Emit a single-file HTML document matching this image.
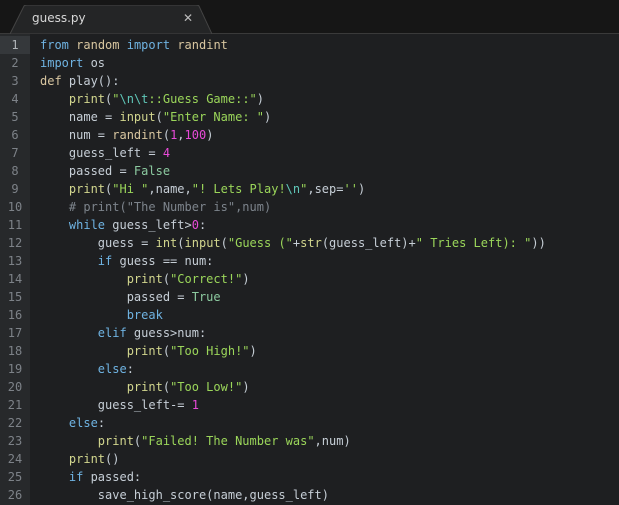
<!DOCTYPE html>
<html><head><style>
body{margin:0;width:619px;height:505px;overflow:hidden;background:#1e1f21;font-family:"DejaVu Sans Mono","Liberation Mono",monospace;}
.bar{position:absolute;left:0;top:0;width:619px;height:33px;background:#161616;border-bottom:1px solid #3a3a3a;}
.tab{position:absolute;left:10px;top:5px;width:202px;height:29px;}
.tab svg{position:absolute;left:0;top:0}
.tab .t{position:absolute;left:22px;top:6px;font:12px "DejaVu Sans","Liberation Sans",sans-serif;color:#d8d8d8}
.tab .x{position:absolute;left:173px;top:6px;font:12px "DejaVu Sans",sans-serif;color:#bbb}
.gut{position:absolute;left:0;top:34px;width:30px;height:471px;background:#27292b;}
.ln{position:absolute;left:0;width:30px;text-align:center;font-size:12px;color:#7d8288;line-height:18px}
.cur{position:absolute;left:0;top:36px;width:30px;height:18px;background:#35383b}
pre{position:absolute;left:40px;top:36px;margin:0;font-size:12px;line-height:18px;color:#c6ced6;font-family:inherit}
.k{color:#6fb3e2}.b{color:#d2d68e}.m{color:#d8c6a0}.s{color:#9bd65a}.e{color:#5fc7b8}.n{color:#e84ad8}.c{color:#7d848c}.v{color:#8ccaa0}
</style></head><body>
<div class="bar"></div>
<div class="tab"><svg width="202" height="29"><path d="M0 29 L14 1 Q15 0 17 0 L186 0 Q188 0 189 1 L202 29 Z" fill="#242526" stroke="#444"/></svg><span class="t">guess.py</span><span class="x">✕</span></div>
<div class="gut"></div>
<div class="cur"></div>
<div class="ln" style="top:36px;color:#b0b4b8">1<br><span style="color:#7d8288">2<br>3<br>4<br>5<br>6<br>7<br>8<br>9<br>10<br>11<br>12<br>13<br>14<br>15<br>16<br>17<br>18<br>19<br>20<br>21<br>22<br>23<br>24<br>25<br>26</span></div>
<pre><span class="k">from</span> <span class="m">random</span> <span class="k">import</span> <span class="m">randint</span>
<span class="k">import</span> os
<span class="m">def</span> play():
    <span class="b">print</span>(<span class="s">"</span><span class="e">\n\t</span><span class="s">::Guess Game::"</span>)
    name = <span class="b">input</span>(<span class="s">"Enter Name: "</span>)
    num = <span class="m">randint</span>(<span class="n">1</span>,<span class="n">100</span>)
    guess_left = <span class="n">4</span>
    passed = <span class="v">False</span>
    <span class="b">print</span>(<span class="s">"Hi "</span>,name,<span class="s">"! Lets Play!</span><span class="e">\n</span><span class="s">"</span>,sep=<span class="s">''</span>)
    <span class="c"># print("The Number is",num)</span>
    <span class="k">while</span> guess_left&gt;<span class="n">0</span>:
        guess = <span class="b">int</span>(<span class="b">input</span>(<span class="s">"Guess ("</span>+<span class="b">str</span>(guess_left)+<span class="s">" Tries Left): "</span>))
        <span class="k">if</span> guess == num:
            <span class="b">print</span>(<span class="s">"Correct!"</span>)
            passed = <span class="v">True</span>
            <span class="k">break</span>
        <span class="k">elif</span> guess&gt;num:
            <span class="b">print</span>(<span class="s">"Too High!"</span>)
        <span class="k">else</span>:
            <span class="b">print</span>(<span class="s">"Too Low!"</span>)
        guess_left-= <span class="n">1</span>
    <span class="k">else</span>:
        <span class="b">print</span>(<span class="s">"Failed! The Number was"</span>,num)
    <span class="b">print</span>()
    <span class="k">if</span> passed:
        save_high_score(name,guess_left)</pre>
</body></html>
